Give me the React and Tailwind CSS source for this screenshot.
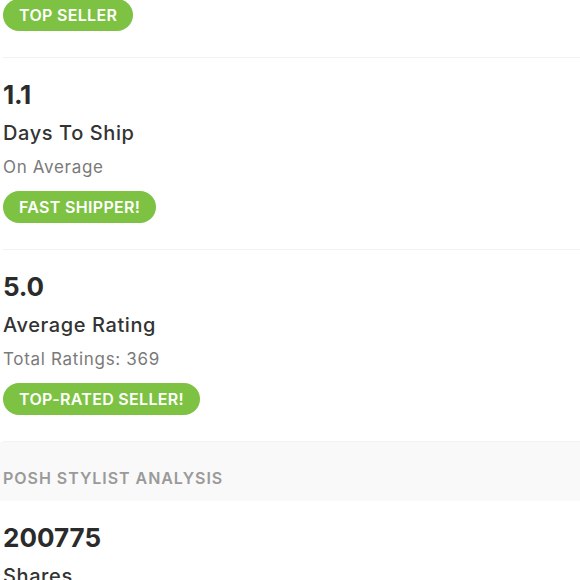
const STATS = [
  { value: '1.1', label: 'Days To Ship', sub: 'On Average', badge: 'FAST SHIPPER!' },
  { value: '5.0', label: 'Average Rating', sub: 'Total Ratings: 369', badge: 'TOP-RATED SELLER!' },
];

function Badge({ label }) {
  return (
    <span className="inline-flex items-center h-[32px] px-[16px] rounded-full bg-[#7dc242] text-white text-[16px] font-semibold leading-none tracking-[0.02em]">
      {label}
    </span>
  );
}

function Stat({ value, label, sub, badge }) {
  return (
    <div className="ml-[3px] pt-[21px] pb-[26px] border-b border-[#f2f2f2]">
      <div className="text-[26px] leading-[32px] font-bold text-[#2b2b2b] tracking-[-0.01em]">{value}</div>
      <div className="mt-[10px] text-[20px] leading-[24px] font-medium text-[#333] tracking-[0.03em]">{label}</div>
      <div className="mt-[12px] text-[17px] leading-[20px] text-[#7a7a7a] tracking-[0.04em]">{sub}</div>
      <div className="mt-[14px]">
        <Badge label={badge} />
      </div>
    </div>
  );
}

export default function App() {
  return (
    <div className="w-[580px] h-[580px] overflow-hidden bg-white" style={{ fontFamily: 'Inter, "Noto Sans", sans-serif' }}>
      <div className="-mt-[1px] ml-[3px] pb-[26px] border-b border-[#f2f2f2]">
        <Badge label="TOP SELLER" />
      </div>
      {STATS.map(s => <Stat key={s.label} {...s} />)}
      <div className="bg-[#f9f9f9] pl-[3px] pt-[26px] pb-[13px]">
        <div className="text-[16px] leading-[20px] font-semibold text-[#9a9a9a] tracking-[0.06em]">POSH STYLIST ANALYSIS</div>
      </div>
      <div className="ml-[3px] pt-[21px]">
        <div className="text-[26px] leading-[32px] font-bold text-[#2b2b2b]">200775</div>
        <div className="mt-[10px] text-[20px] leading-[24px] font-medium text-[#333] tracking-[0.03em]">Shares</div>
      </div>
    </div>
  );
}
